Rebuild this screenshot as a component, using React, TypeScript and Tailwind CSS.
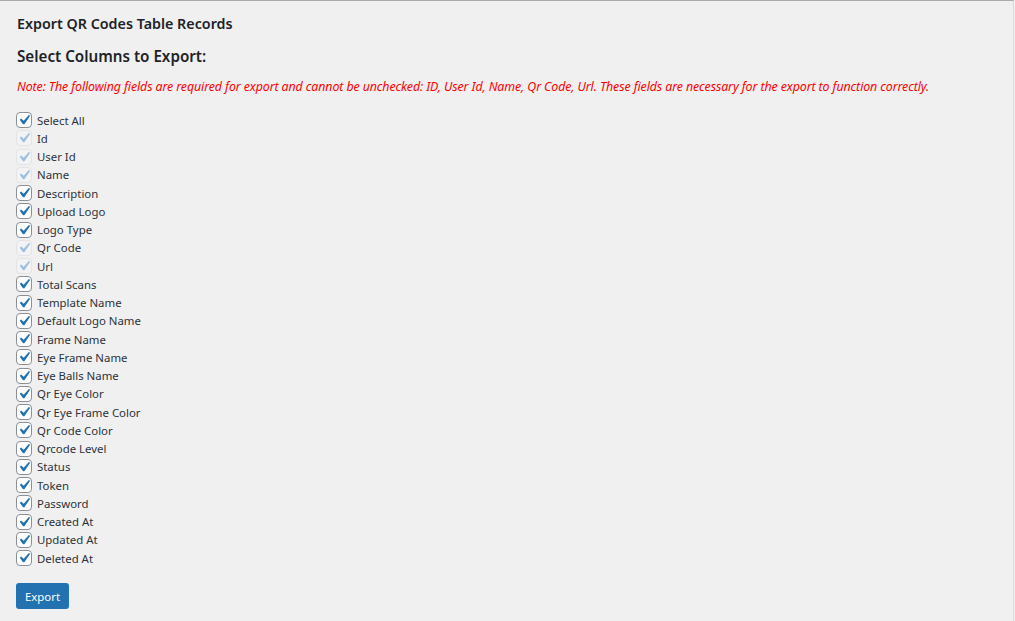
import React, { useState } from "react";

const columns = [
  "Id",
  "User Id",
  "Name",
  "Description",
  "Upload Logo",
  "Logo Type",
  "Qr Code",
  "Url",
  "Total Scans",
  "Template Name",
  "Default Logo Name",
  "Frame Name",
  "Eye Frame Name",
  "Eye Balls Name",
  "Qr Eye Color",
  "Qr Eye Frame Color",
  "Qr Code Color",
  "Qrcode Level",
  "Status",
  "Token",
  "Password",
  "Created At",
  "Updated At",
  "Deleted At",
];

const required = ["Id", "User Id", "Name", "Qr Code", "Url"];

const Check = ({ checked, disabled }: { checked: boolean; disabled?: boolean }) => (
  <span
    className={
      "flex h-4 w-4 shrink-0 items-center justify-center overflow-visible rounded-[4px] border " +
      (disabled ? "border-[#e2e4e7] bg-[#f3f3f4]" : "border-[#8c8f94] bg-white")
    }
  >
    {checked && (
      <svg viewBox="0 0 20 20" className="h-[20px] w-[20px] shrink-0">
        <path
          d="M14.83 4.89l1.34.94-5.81 8.38H9.02L5.78 9.67l1.34-1.25 2.57 2.4z"
          fill={disabled ? "#9dbfe0" : "#2271b1"}
        />
      </svg>
    )}
  </span>
);

const ExportColumns = () => {
  const [selected, setSelected] = useState<string[]>(columns);
  const allOn = selected.length === columns.length;

  const toggle = (name: string) => {
    if (required.includes(name)) return;
    setSelected(selected.includes(name) ? selected.filter((c) => c !== name) : [...selected, name]);
  };

  const toggleAll = () => {
    setSelected(allOn ? required : columns);
  };

  return (
    <div
      className="min-h-screen bg-[#f0f0f1] text-[#2c3338]"
      style={{ fontFamily: '"Noto Sans", "Open Sans", sans-serif' }}
    >
      <div className="h-[621px] border-t border-r border-[#a7aaad] border-r-[#dcdcde] mr-[1px] px-4 pt-[13px]">
        <h1 className="pl-[1px] text-[14.3px] font-semibold leading-[20px] text-[#1d2327]">
          Export QR Codes Table Records
        </h1>
        <h2 className="mt-[12px] pl-[1px] text-[15.2px] font-semibold leading-[20px] text-[#1d2327]">
          Select Columns to Export:
        </h2>
        <p className="mt-[12px] pl-[1px] text-[12.4px] italic leading-[18px] text-[#ff0000] tracking-[-0.1px]">
          Note: The following fields are required for export and cannot be unchecked: ID, User Id, Name, Qr Code, Url.
          These fields are necessary for the export to function correctly.
        </p>

        <div className="mt-[15px] flex flex-col">
          <label className="flex h-[18.25px] cursor-pointer items-center gap-[5px] text-[11.4px]" onClick={toggleAll}>
            <Check checked={allOn} />
            <span>Select All</span>
          </label>
          {columns.map((c) => {
            const req = required.includes(c);
            return (
              <label
                key={c}
                className="flex h-[18.25px] cursor-pointer items-center gap-[5px] text-[11.4px]"
                onClick={() => toggle(c)}
              >
                <Check checked={req || selected.includes(c)} disabled={req} />
                <span>{c}</span>
              </label>
            );
          })}
        </div>

        <button
          type="button"
          className="mt-[16px] h-[26px] rounded-[3px] bg-[#2271b1] px-[9px] text-[11.4px] text-white hover:bg-[#135e96]"
        >
          Export
        </button>
      </div>
    </div>
  );
};

export default function App() {
  return <ExportColumns />;
}
